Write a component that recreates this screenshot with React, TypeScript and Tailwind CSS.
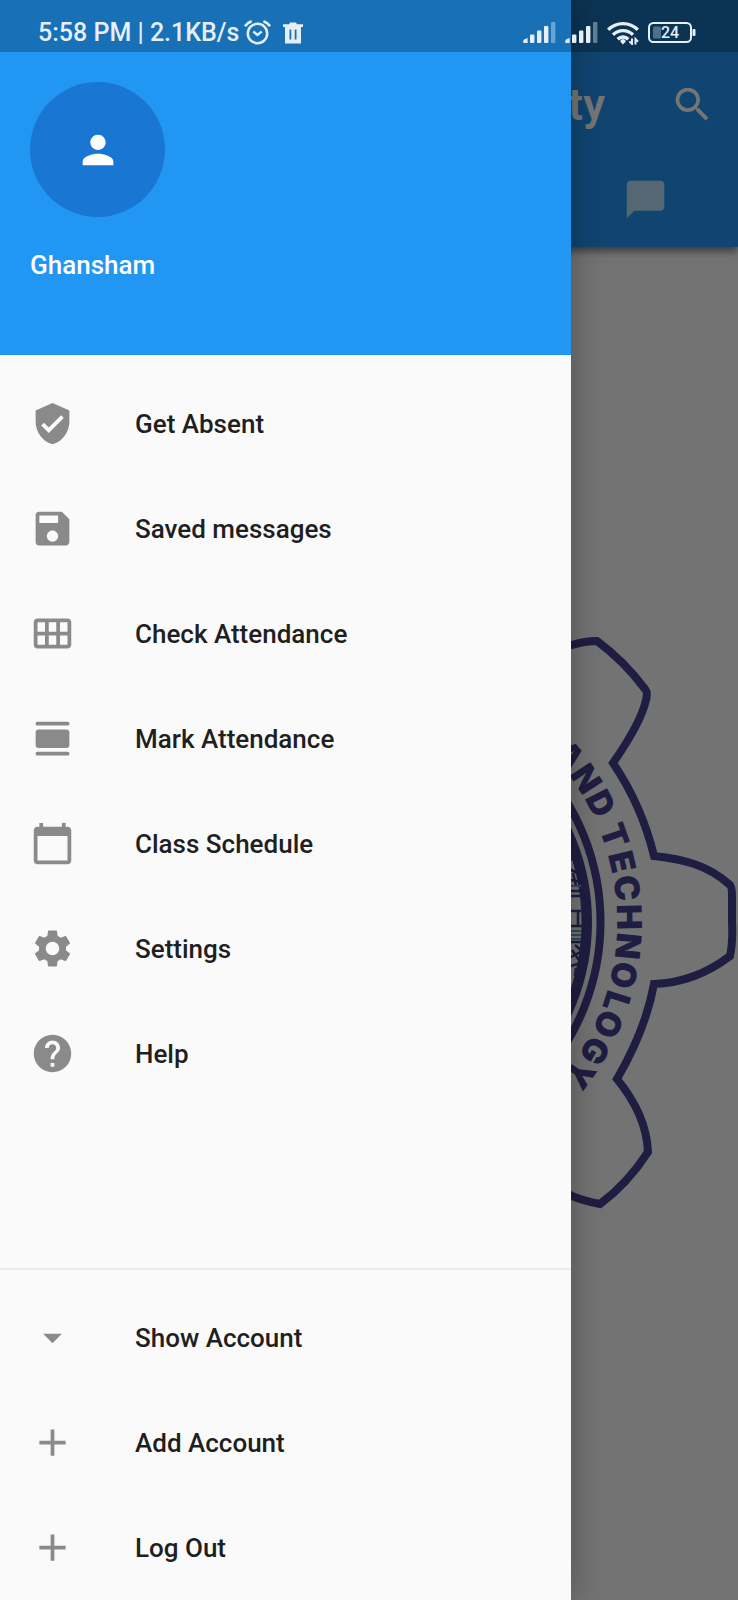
import type { ComponentType, ReactNode } from "react";
import {
  MdAdd,
  MdArrowDropDown,
  MdCalendarToday,
  MdCalendarViewMonth,
  MdChatBubble,
  MdEvent,
  MdGroup,
  MdHelp,
  MdHome,
  MdPerson,
  MdSave,
  MdSearch,
  MdSettings,
  MdVerifiedUser,
} from "react-icons/md";

type IconType = ComponentType<{ className?: string }>;

function ViewDayIcon({ className }: { className?: string }) {
  return (
    <svg viewBox="0 0 24 24" fill="currentColor" className={className} aria-hidden="true">
      <rect x="3" y="3" width="18" height="2" rx="0.8" />
      <rect x="3" y="7.2" width="18" height="9.8" rx="1.6" />
      <rect x="3" y="19.1" width="18" height="2" rx="0.8" />
    </svg>
  );
}

const menuItems: { label: string; icon: IconType }[] = [
  { label: "Get Absent", icon: MdVerifiedUser },
  { label: "Saved messages", icon: MdSave },
  { label: "Check Attendance", icon: MdCalendarViewMonth },
  { label: "Mark Attendance", icon: ViewDayIcon },
  { label: "Class Schedule", icon: MdCalendarToday },
  { label: "Settings", icon: MdSettings },
  { label: "Help", icon: MdHelp },
];

const accountItems: { label: string; icon: IconType }[] = [
  { label: "Show Account", icon: MdArrowDropDown },
  { label: "Add Account", icon: MdAdd },
  { label: "Log Out", icon: MdAdd },
];

const tabs: { label: string; icon: IconType }[] = [
  { label: "Home", icon: MdHome },
  { label: "Groups", icon: MdGroup },
  { label: "Events", icon: MdEvent },
  { label: "Chat", icon: MdChatBubble },
];

function DrawerItem({ label, icon: Icon }: { label: string; icon: IconType }) {
  return (
    <li>
      <button type="button" className="flex h-[105px] w-full items-center gap-[60px] px-[30px] text-left">
        <Icon className="size-[45px] shrink-0 text-[#8a8a8a]" />
        <span className="text-[26px] leading-8 font-medium text-[#1f1f1f]">{label}</span>
      </button>
    </li>
  );
}

/* Letters of the outer ring with their angle in degrees, clockwise from east. */
const ringLetters: { char: string; angle: number }[] = [
  { char: "A", angle: -39.8 },
  { char: "N", angle: -33.4 },
  { char: "D", angle: -27.1 },
  { char: "T", angle: -19.4 },
  { char: "E", angle: -13.4 },
  { char: "C", angle: -7.5 },
  { char: "H", angle: -1.1 },
  { char: "N", angle: 5.3 },
  { char: "O", angle: 11.8 },
  { char: "L", angle: 17.8 },
  { char: "O", angle: 23.1 },
  { char: "G", angle: 29.7 },
  { char: "Y", angle: 35.8 },
];

function Crest() {
  return (
    <svg viewBox="-369 -369 738 738" className="w-full" role="img" aria-label="University crest">
      <g fill="none" stroke="#474190" strokeWidth="8">
        <g id="crest-half">
          <path d="M0 -244 C70 -250 120 -240 168 -262 C180 -274 190 -277 203 -277 Q216 -281 228 -281 C247 -267 264 -249 276 -233 Q279 -230 277 -222 C273 -204 260 -182 244 -159 C263 -131 277 -99 285 -66 C312 -63 338 -58 361 -37 Q363 -35 363 -26 L363 0 Q364 20 361 34 C340 50 315 61 285 62 C279 95 266 126 248 157 C266 179 278 204 279 230 C266 250 250 268 231 282 Q215 279 203 274 C150 240 70 250 0 244" />
        </g>
        <use href="#crest-half" transform="scale(-1 1)" />
        <circle r="231.5" />
        <circle r="219" />
        <circle r="214" strokeWidth="3" />
      </g>
      <g fill="none" stroke="#474190" strokeWidth="2.5">
        <path d="M198 -65 L209 -60 M200 -53 L211 -48 M202 -42 L212 -40 M204 -49 L207 -36" />
        <path d="M200 -31 H214 M200 -26 H214" />
        <path d="M198 -11 H212 M209 -11 V4 M198 4 H214" />
        <path d="M200 20 H213 M206 23 L213 29 L202 35 M203 28 L212 41 L202 44 M207 46 L206 54" />
      </g>
      <g fill="none" stroke="#6aa5c4" strokeWidth="2">
        <path d="M200 -36 H212 M200 9 H212 M200 13 H212 M200 17 H212" />
      </g>
      <g
        fill="#474190"
        fontFamily="Inter, 'Liberation Sans', sans-serif"
        fontSize="34"
        fontWeight="900"
        textAnchor="middle"
      >
        {ringLetters.map(({ char, angle }) => (
          <text key={angle} y="-248" transform={`rotate(${angle + 90})`}>
            {char}
          </text>
        ))}
      </g>
    </svg>
  );
}

function SignalIcon() {
  return (
    <svg viewBox="0 0 33 21" className="h-[21px] w-[33px]" fill="currentColor" aria-hidden="true">
      <path d="M1 17.5 4.6 16V21H1.5Q0 21 0 19.4Z" />
      <rect x="7" y="12.5" width="4.4" height="8.5" rx="1" />
      <rect x="14" y="8.5" width="4.4" height="12.5" rx="1" />
      <rect x="21" y="4" width="4.4" height="17" rx="1" />
      <rect x="28" y="0" width="4.4" height="21" rx="1" opacity="0.4" />
    </svg>
  );
}

function WifiIcon() {
  return (
    <svg viewBox="0 0 32 24" className="h-6 w-8" fill="none" stroke="currentColor" aria-hidden="true">
      <g strokeWidth="3.4">
        <path d="M1.2 8.8C9.4 0.5 22.6 0.5 30.8 8.8" />
        <path d="M6 13.8C11.5 8.2 20.5 8.2 26 13.8" />
        <path d="M10.7 18.2C13.7 15.2 18.3 15.2 21.3 18.2" />
      </g>
      <path d="M16 18a3 3 0 0 1 2.8 2.600L16 23.500l-2.800-2.900A3 3 0 0 1 16 18Z" fill="currentColor" stroke="none" />
      <path d="M25 17.500V23l-2.600-2.600M28.500 23.500V18l2.600 2.600" strokeWidth="2" />
    </svg>
  );
}

function AlarmIcon() {
  return (
    <svg viewBox="0 0 27 25" className="h-[25px] w-[27px]" fill="none" stroke="currentColor" aria-hidden="true">
      <circle cx="13.5" cy="13.5" r="9.7" strokeWidth="2.5" />
      <path d="M1 6.2Q3.500 2.500 7.600 1.200M26 6.200Q23.500 2.500 19.400 1.200" strokeWidth="2.600" />
      <path d="m9.300 11.500 4.200 3.500 4.200-3.500" strokeWidth="2.400" />
    </svg>
  );
}

function TrashIcon() {
  return (
    <svg viewBox="0 0 20 22" className="h-[22px] w-5" fill="currentColor" aria-hidden="true">
      <path
        fillRule="evenodd"
        d="M0 2.200H6L7 .5h6l1 1.700h6V5h-2v16.500H2V5H0ZM6.500 7.500v10H8.300v-10Zm5.200 0v10H13.500v-10Z"
      />
    </svg>
  );
}

function BatteryIcon() {
  return (
    <svg viewBox="0 0 48 21" className="h-[21px] w-12" aria-hidden="true">
      <rect x="1" y="1" width="42" height="19" rx="4.5" fill="none" stroke="currentColor" strokeWidth="2" />
      <rect x="5" y="4.5" width="8" height="12" rx="1.5" fill="#4f7088" />
      <rect x="44.5" y="7" width="3" height="7" rx="1" fill="currentColor" />
      <text x="22" y="16" textAnchor="middle" fontSize="16" fontWeight="500" fill="currentColor">
        24
      </text>
    </svg>
  );
}

function StatusBar() {
  return (
    <div className="absolute inset-x-0 top-0 flex h-13 items-center justify-between bg-black/25 pt-[13px] pr-[42px] pl-[38px] text-[#e6eff6]">
      <div className="flex items-center">
        <span className="text-[25px] leading-7 font-medium whitespace-nowrap">5:58 PM | 2.1KB/s</span>
        <span className="flex items-center gap-3 pl-[5px]">
          <AlarmIcon />
          <TrashIcon />
        </span>
      </div>
      <div className="flex items-center gap-[9px]">
        <SignalIcon />
        <SignalIcon />
        <WifiIcon />
        <BatteryIcon />
      </div>
    </div>
  );
}

function AppBar({ children }: { children: ReactNode }) {
  return (
    <header className="relative bg-[#2196f3] pt-13 shadow-[0_4px_8px_rgba(0,0,0,0.5)]">
      <div className="flex h-[105px] items-center justify-end gap-[65px] pr-[23px] text-white">
        <h1 className="text-[44px] leading-none font-semibold">University</h1>
        <button type="button" aria-label="Search">
          <MdSearch className="size-[45px]" />
        </button>
      </div>
      {children}
    </header>
  );
}

export default function App() {
  return (
    <div className="relative flex min-h-screen flex-col overflow-hidden bg-[#fafafa] font-['Roboto','Noto_Sans',sans-serif]">
      <AppBar>
        <nav className="grid h-[90px] grid-cols-4 pb-[5px]">
          {tabs.map(({ label, icon: Icon }) => (
            <button key={label} type="button" aria-label={label} className="flex items-center justify-center">
              <Icon className="size-[45px] text-white/70" />
            </button>
          ))}
        </nav>
      </AppBar>
      <main className="flex flex-1 items-center pb-1">
        <Crest />
      </main>

      <div className="absolute inset-0 bg-black/54" />

      <aside className="absolute inset-y-0 left-0 flex w-[571px] max-w-full flex-col bg-[#fafafa] shadow-[0_0_32px_rgba(0,0,0,0.3)]">
        <div className="h-[355px] bg-[#2196f3] px-[30px] pt-[82px]">
          <div className="flex size-[135px] items-center justify-center rounded-full bg-[#1976d2]">
            <MdPerson className="size-[46px] text-white" />
          </div>
          <p className="pt-8 text-[26px] leading-8 font-medium text-white">Ghansham</p>
        </div>
        <ul className="pt-4">
          {menuItems.map((item) => (
            <DrawerItem key={item.label} {...item} />
          ))}
        </ul>
        <ul className="mt-auto border-t-2 border-[#ebebeb] pt-[15px]">
          {accountItems.map((item) => (
            <DrawerItem key={item.label} {...item} />
          ))}
        </ul>
      </aside>

      <StatusBar />
    </div>
  );
}
